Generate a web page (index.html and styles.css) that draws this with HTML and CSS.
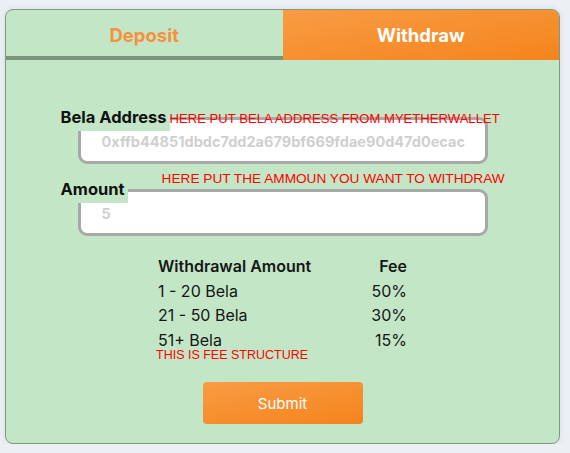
FILE: index.html
```html
<!DOCTYPE html>
<html>
<head>
<meta charset="utf-8">
<link rel="stylesheet" href="styles.css">
</head>
<body>
<div class="card">
  <div class="tabs">
    <div class="tab tab-deposit">Deposit</div>
    <div class="tab tab-withdraw">Withdraw</div>
  </div>
  <div class="panel">
    <div class="form">
      <div class="field">
        <div class="label-row">
          <span class="label">Bela Address</span>
          <span class="note note-address">HERE PUT BELA ADDRESS FROM MYETHERWALLET</span>
        </div>
        <div class="input"><span class="placeholder">0xffb44851dbdc7dd2a679bf669fdae90d47d0ecac</span></div>
      </div>
      <div class="field field-amount">
        <div class="label-row">
          <span class="label">Amount</span>
          <span class="note note-amount">HERE PUT THE AMMOUN YOU WANT TO WITHDRAW</span>
        </div>
        <div class="input"><span class="placeholder">5</span></div>
      </div>
    </div>
    <div class="fees">
      <div class="fee-row fee-head"><span>Withdrawal Amount</span><span>Fee</span></div>
      <div class="fee-row"><span>1 - 20 Bela</span><span>50%</span></div>
      <div class="fee-row"><span>21 - 50 Bela</span><span>30%</span></div>
      <div class="fee-row"><span>51+ Bela</span><span>15%</span></div>
      <div class="note note-fee">THIS IS FEE STRUCTURE</div>
    </div>
    <button class="submit">Submit</button>
  </div>
</div>
</body>
</html>
```
FILE: styles.css
```css
html, body {
  margin: 0;
  padding: 0;
}
body {
  background: #eceff4;
  padding: 9px 0 0 5px;
  font-family: "Inter", "Liberation Sans", sans-serif;
  color: #111;
}
.card {
  width: 553px;
  height: 433px;
  border: 1px solid #809a82;
  border-radius: 8px;
  background: #c2e6c6;
  box-shadow: 0 0 6px rgba(80, 90, 120, 0.12);
  overflow: hidden;
  display: flex;
  flex-direction: column;
}
.tabs {
  display: flex;
  height: 50px;
}
.tab {
  flex: 1;
  display: flex;
  align-items: center;
  justify-content: center;
  font-weight: 700;
  font-size: 18.5px;
  box-sizing: border-box;
}
.tab-deposit {
  color: #f7913d;
  border-bottom: 4px solid #7b957c;
  padding-top: 4px;
}
.tab-withdraw {
  color: #fff;
  background: linear-gradient(170deg, #f89c44 0%, #f5841c 100%);
}
.panel {
  display: flex;
  flex-direction: column;
  align-items: center;
  padding-top: 44px;
}
.form {
  width: 410px;
  display: flex;
  flex-direction: column;
  gap: 12px;
}
.label-row {
  display: flex;
  align-items: baseline;
  margin-left: -20px;
  white-space: nowrap;
}
.label {
  position: relative;
  z-index: 1;
  flex-shrink: 0;
  background: #c2e6c6;
  font-weight: 700;
  font-size: 16.5px;
  line-height: 27px;
  height: 27px;
  padding: 0 3px 0 3px;
}
.note {
  color: #ff0000;
  font-family: "Liberation Sans", sans-serif;
  font-size: 13.5px;
  font-weight: 400;
  white-space: nowrap;
  flex-shrink: 0;
}
.note-address {
  font-size: 13.1px;
}
.note-amount {
  align-self: flex-start;
  margin-top: -5px;
  margin-left: 34px;
  font-size: 13.65px;
}
.input {
  height: 47px;
  margin-top: -14px;
  box-sizing: border-box;
  border: 3px solid #a8a8a8;
  border-radius: 9px;
  background: #fff;
  display: flex;
  align-items: center;
  padding-left: 21px;
  padding-top: 2px;
}
.placeholder {
  color: #cfcfcf;
  font-weight: 700;
  font-size: 14.5px;
}
.fees {
  width: 249px;
  margin-top: 18px;
  display: flex;
  flex-direction: column;
}
.fee-row {
  display: flex;
  justify-content: space-between;
  font-size: 16px;
  line-height: 24.6px;
  color: #161616;
}
.fee-head {
  font-weight: 600;
}
.note-fee {
  font-size: 12.5px;
  line-height: 13px;
  margin-top: -3px;
  margin-left: -2px;
}
.submit {
  margin-top: 20px;
  width: 160px;
  height: 42px;
  border: none;
  border-radius: 4px;
  background: linear-gradient(170deg, #f89c44 0%, #f5841c 100%);
  color: #fff;
  font-family: "Inter", "Liberation Sans", sans-serif;
  font-size: 15px;
  padding: 0;
}
```
